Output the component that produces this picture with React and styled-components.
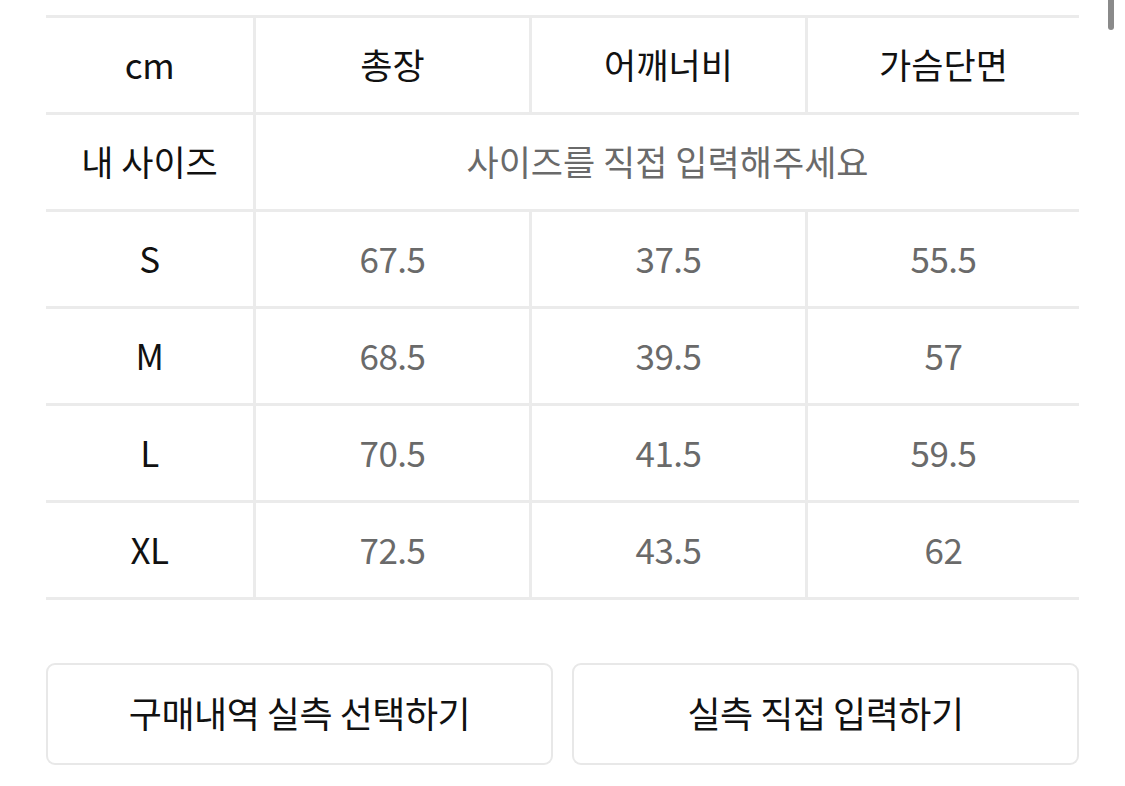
import styled, { createGlobalStyle } from "styled-components";

const GlobalStyle = createGlobalStyle`
  html, body {
    margin: 0;
    padding: 0;
    background: #fff;
  }
  body {
    font-family: "Noto Sans CJK KR", "Liberation Sans", sans-serif;
    color: #111;
  }
`;

const Page = styled.div`
  width: 1125px;
  height: 786px;
  box-sizing: border-box;
  padding: 15px 46px 0 46px;
  position: relative;
  overflow: hidden;
`;

const Table = styled.div`
  border-top: 3px solid #ebebeb;
`;

const Row = styled.div`
  display: grid;
  grid-template-columns: 207px 276px 276px 1fr;
  height: 97px;
  box-sizing: border-box;
  border-bottom: 3px solid #ebebeb;
`;

const Cell = styled.div`
  display: flex;
  align-items: center;
  justify-content: center;
  grid-column: ${(props) => (props.$span ? `span ${props.$span}` : "auto")};
  border-left: ${(props) => (props.$first ? "none" : "3px solid #ebebeb")};
  font-size: 35px;
  letter-spacing: ${(props) => (props.$ko ? "0" : "-0.5px")};
  color: ${(props) => (props.$muted ? "#6a6a6a" : "#111")};
  padding-bottom: 4px;
  white-space: nowrap;
`;

const Buttons = styled.div`
  display: grid;
  grid-template-columns: 1fr 1fr;
  gap: 19px;
  margin-top: 63px;
`;

const Button = styled.button`
  height: 102px;
  background: #fff;
  border: 2px solid #e8e8e8;
  border-radius: 9px;
  font-family: "Noto Sans CJK KR", sans-serif;
  font-size: 36px;
  letter-spacing: -0.5px;
  color: #111;
  padding: 0 0 4px 0;
  white-space: nowrap;
`;

const Scrollbar = styled.div`
  position: absolute;
  top: 0;
  left: 1108px;
  width: 6px;
  height: 30px;
  border-radius: 0 0 3px 3px;
  background: #8a8a8a;
`;

const rows = [
  ["S", "67.5", "37.5", "55.5"],
  ["M", "68.5", "39.5", "57"],
  ["L", "70.5", "41.5", "59.5"],
  ["XL", "72.5", "43.5", "62"],
];

const App = () => {
  return (
    <Page>
      <GlobalStyle />
      <Table>
        <Row>
          <Cell $first>cm</Cell>
          <Cell $ko>총장</Cell>
          <Cell $ko>어깨너비</Cell>
          <Cell $ko>가슴단면</Cell>
        </Row>
        <Row>
          <Cell $first $ko>내 사이즈</Cell>
          <Cell $ko $muted $span={3}>사이즈를 직접 입력해주세요</Cell>
        </Row>
        {rows.map((r) => (
          <Row key={r[0]}>
            <Cell $first>{r[0]}</Cell>
            <Cell $muted>{r[1]}</Cell>
            <Cell $muted>{r[2]}</Cell>
            <Cell $muted>{r[3]}</Cell>
          </Row>
        ))}
      </Table>
      <Buttons>
        <Button>구매내역 실측 선택하기</Button>
        <Button>실측 직접 입력하기</Button>
      </Buttons>
      <Scrollbar />
    </Page>
  );
};

export default App;
